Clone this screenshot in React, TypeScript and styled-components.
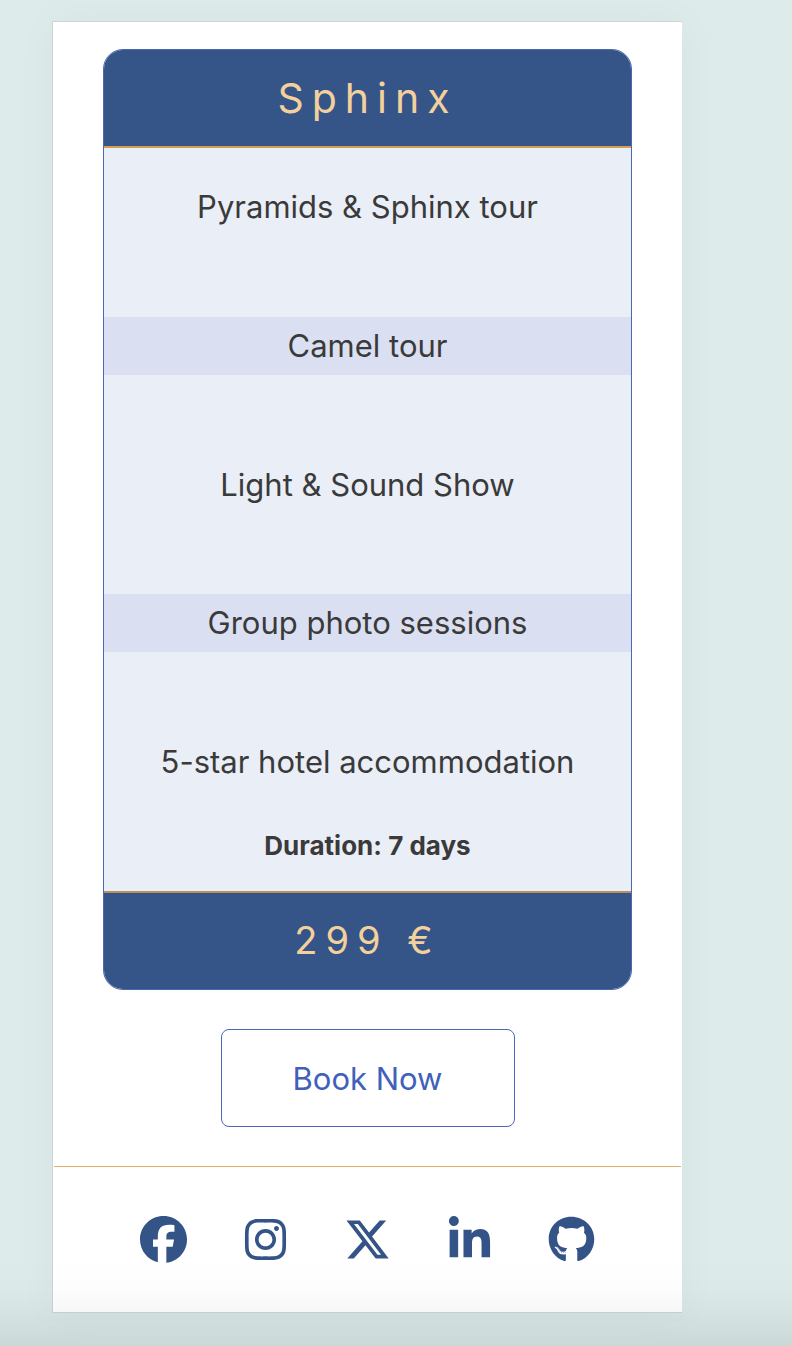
import React from "react";
import styled, { createGlobalStyle } from "styled-components";
import { FaFacebook, FaInstagram, FaXTwitter, FaLinkedinIn, FaGithub } from "react-icons/fa6";

const GlobalStyle = createGlobalStyle`
  * { box-sizing: border-box; }
  body {
    margin: 0;
    background: #ddebeb;
    color: #3a3a3a;
    font-family: Inter, "Liberation Sans", sans-serif;
  }
`;

const Page = styled.div`
  min-height: 100vh;
  padding: 21px 110px 33px 52px;
`;

const Panel = styled.main`
  display: flex;
  flex-direction: column;
  background: #fff;
  border: 1px solid #d0d3d4;
  border-right: 0;
  box-shadow: 0 0 40px rgba(0, 0, 0, 0.04);
`;

const Offer = styled.section`
  display: flex;
  flex-direction: column;
  align-items: center;
  gap: 39px;
  padding: 27px 50px 39px;
`;

const Card = styled.article`
  width: 100%;
  overflow: hidden;
  background: #eaeef7;
  border: 1px solid #4a69b5;
  border-radius: 20px;
  text-align: center;
`;

const CardTitle = styled.h2`
  margin: 0;
  padding: 20px 0;
  background: #355588;
  border-bottom: 2px solid #d59e57;
  color: #f3d19c;
  font-size: 41px;
  font-weight: 400;
  line-height: 56px;
  letter-spacing: 8px;
`;

const Features = styled.ul`
  display: flex;
  flex-direction: column;
  justify-content: space-between;
  min-height: 613px;
  margin: 30px 0 0;
  padding: 0;
  list-style: none;
`;

const Feature = styled.li<{ $shaded: boolean }>`
  background: ${(p) => (p.$shaded ? "#dae0f2" : "transparent")};
  font-size: 31px;
  line-height: 58px;
`;

const Duration = styled.p`
  margin: 0;
  padding: 35px 0 25px;
  font-size: 26px;
  font-weight: 700;
  line-height: 40px;
`;

const Price = styled.p`
  margin: 0;
  padding: 19px 0 21px;
  background: #355588;
  border-top: 2px solid #b98f5c;
  color: #f3d19c;
  font-size: 38px;
  font-weight: 400;
  line-height: 56px;
  letter-spacing: 8px;
`;

const BookButton = styled.button`
  width: 294px;
  padding: 21px 20px 19px;
  background: #fff;
  border: 1px solid #4a69bd;
  border-radius: 8px;
  color: #4060bb;
  font: inherit;
  font-size: 31px;
  line-height: 56px;
`;

const Footer = styled.footer`
  margin: 0 1px;
  border-top: 1px solid #dfae66;
`;

const SocialNav = styled.nav`
  display: flex;
  justify-content: center;
  gap: 55px;
  padding: 49px 0;
`;

const SocialLink = styled.a`
  display: flex;
  color: #345487;

  svg {
    width: 47px;
    height: 47px;
  }
`;

const BottomFade = styled.div`
  position: fixed;
  inset: auto 0 0;
  height: 90px;
  background: linear-gradient(
    transparent,
    rgba(0, 0, 0, 0.008) 35%,
    rgba(0, 0, 0, 0.03) 62%,
    rgba(0, 0, 0, 0.08)
  );
  pointer-events: none;
`;

const features = [
  "Pyramids & Sphinx tour",
  "Camel tour",
  "Light & Sound Show",
  "Group photo sessions",
  "5-star hotel accommodation",
];

const socials = [
  { name: "Facebook", Icon: FaFacebook },
  { name: "Instagram", Icon: FaInstagram },
  { name: "X", Icon: FaXTwitter },
  { name: "LinkedIn", Icon: FaLinkedinIn },
  { name: "GitHub", Icon: FaGithub },
];

export default function App() {
  return (
    <>
      <GlobalStyle />
      <Page>
        <Panel>
          <Offer>
            <Card>
              <CardTitle>Sphinx</CardTitle>
              <Features>
                {features.map((text, i) => (
                  <Feature key={text} $shaded={i % 2 === 1}>
                    {text}
                  </Feature>
                ))}
              </Features>
              <Duration>Duration: 7 days</Duration>
              <Price>299 €</Price>
            </Card>
            <BookButton type="button">Book Now</BookButton>
          </Offer>
          <Footer>
            <SocialNav aria-label="Social media">
              {socials.map(({ name, Icon }) => (
                <SocialLink key={name} href="#" aria-label={name}>
                  <Icon aria-hidden />
                </SocialLink>
              ))}
            </SocialNav>
          </Footer>
        </Panel>
      </Page>
      <BottomFade />
    </>
  );
}
